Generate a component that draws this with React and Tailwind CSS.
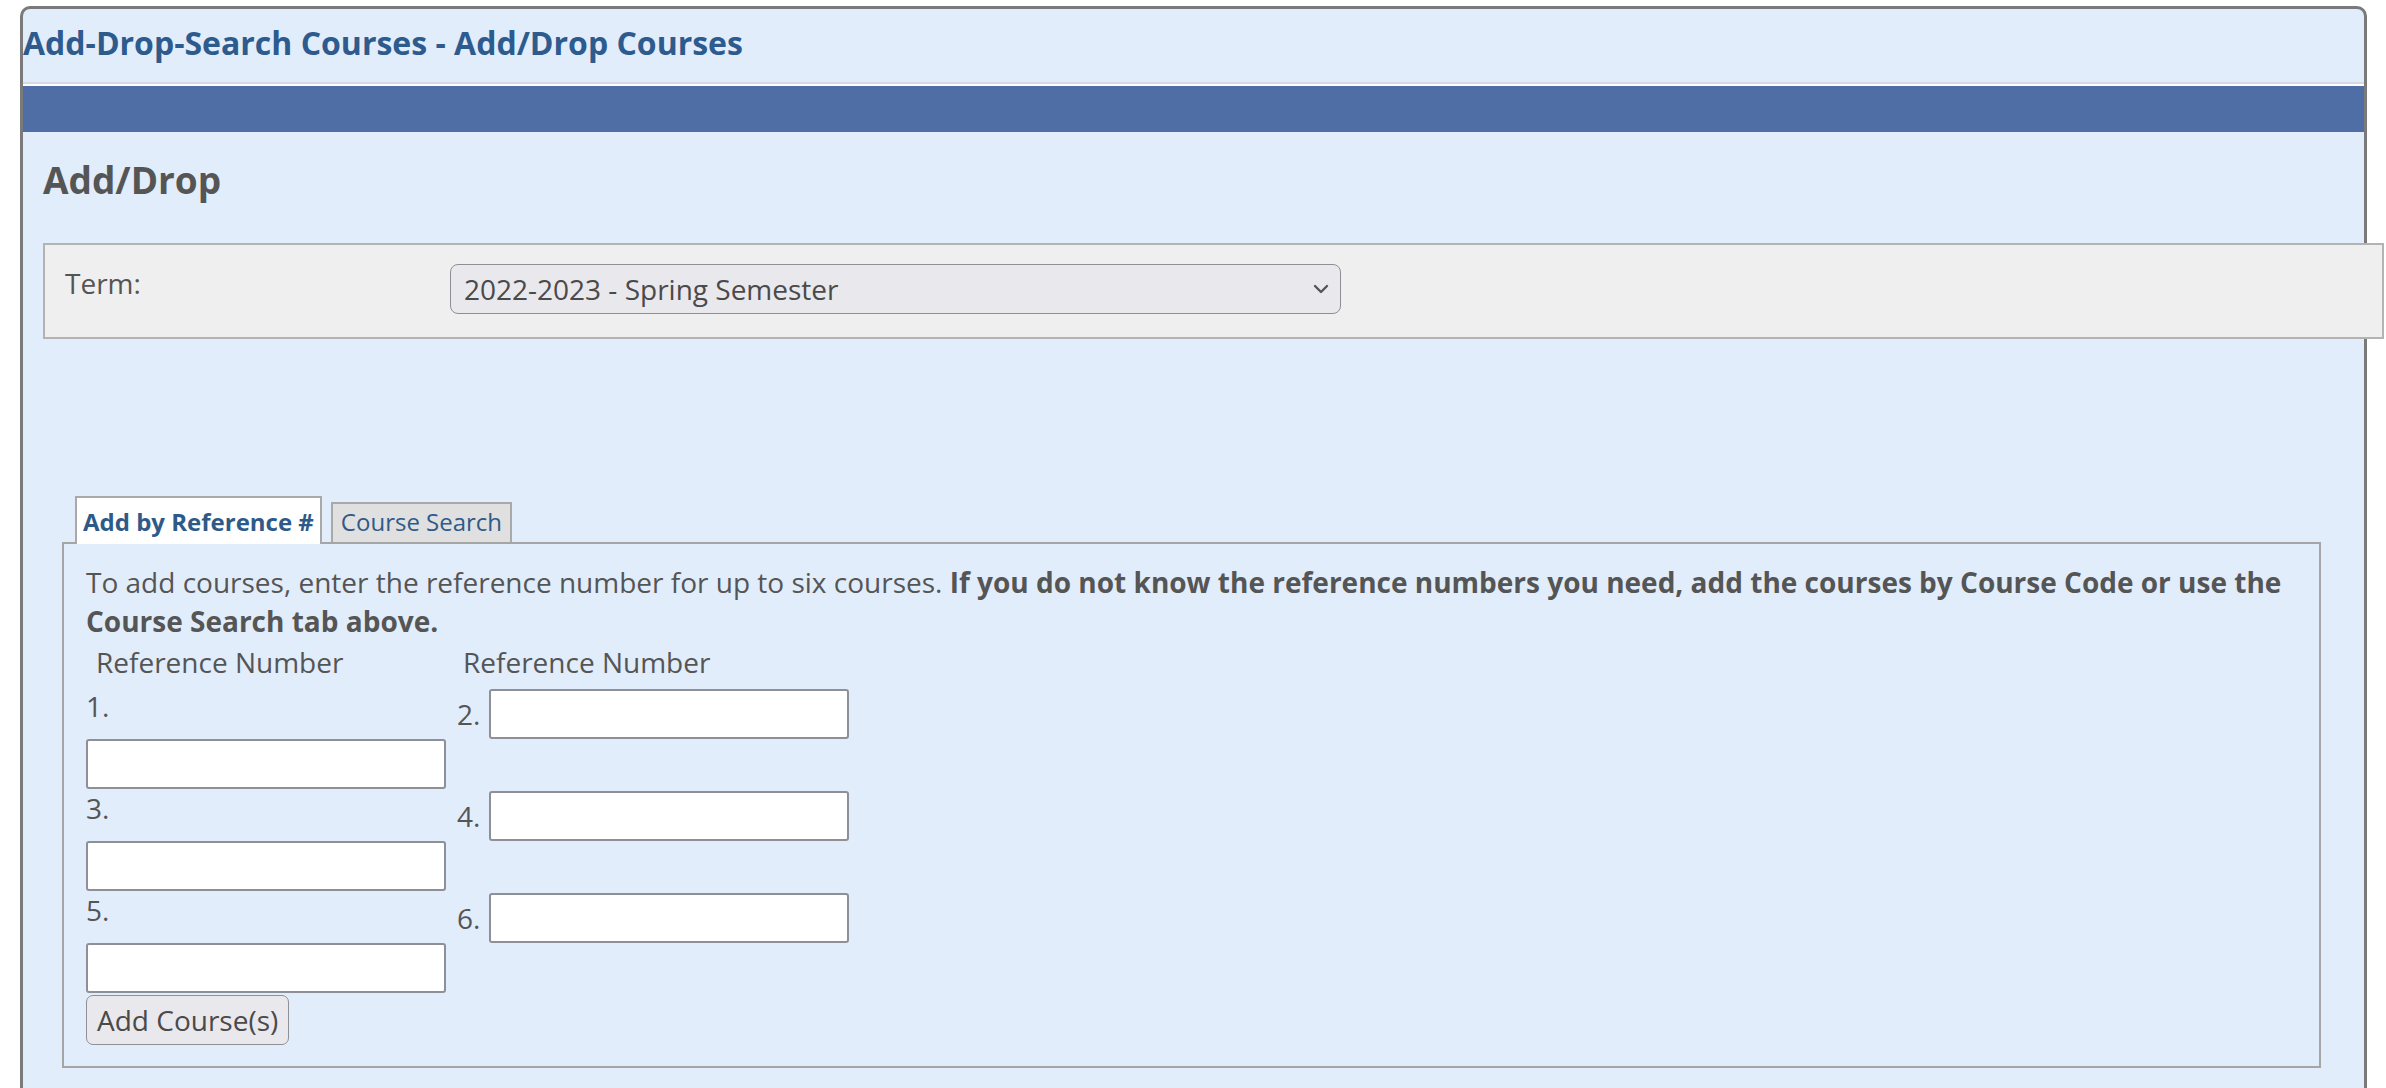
import React from "react";

const rows = [
  ["1.", "2."],
  ["3.", "4."],
  ["5.", "6."],
];

const TextBox = () => (
  <input
    type="text"
    className="block h-[50px] w-[360px] rounded-[3px] border-2 border-[#8f8f97] bg-white outline-none"
  />
);

export default function App() {
  return (
    <div className="min-h-screen overflow-hidden bg-white pl-[20px] pt-[6px] font-['Open_Sans',sans-serif] text-[28px] text-[#555555]">
      <div className="h-[1100px] w-[2347px] rounded-t-[10px] border-[3px] border-b-0 border-[#7a7a7a] bg-[#e1edfb]">
        {/* Page title */}
        <div className="h-[73px] pt-[12px]">
          <h1 className="text-[32px] font-bold leading-[44px] text-[#2e5b8e]">
            Add-Drop-Search Courses - Add/Drop Courses
          </h1>
        </div>
        <div className="h-[2px] bg-[#d5dbe2]" />
        <div className="h-[2px] bg-white" />
        <div className="h-[46px] bg-[#4f6ea5]" />

        <div className="pl-[20px]">
          <h2 className="mt-[23px] text-[37px] font-bold leading-[50px] text-[#555555]">
            Add/Drop
          </h2>

          {/* Term selector */}
          <div className="mt-[38px] flex h-[96px] w-[2341px] items-start border-2 border-[#b3b3b3] bg-[#efefef] pl-[20px] pt-[19px]">
            <span className="w-[385px] leading-[39px]">Term:</span>
            <div className="flex h-[50px] w-[891px] items-center justify-between rounded-[8px] border-[1.5px] border-[#8e8e95] bg-[#e9e8ed] pl-[13px] pr-[11px] text-[#4a4a4a]">
              <span className="leading-[39px]">2022-2023 - Spring Semester</span>
              <svg width="16" height="10" viewBox="0 0 16 10" fill="none">
                <path
                  d="M2 2 L8 8 L14 2"
                  stroke="#555"
                  strokeWidth="2.4"
                  strokeLinecap="round"
                  strokeLinejoin="round"
                />
              </svg>
            </div>
          </div>

          {/* Tabs */}
          <div className="ml-[19px] mt-[157px] w-[2259px]">
            <div className="ml-[13px] flex items-end gap-[9px]">
              <div className="relative z-10 -mb-[2px] h-[48px] border-2 border-b-0 border-[#a9a9a9] bg-white px-[6px] pt-[7px] text-[24px] font-bold leading-[33px] text-[#2e5a8a]">
                Add by Reference #
              </div>
              <div className="h-[40px] border-2 border-b-0 border-[#a9a9a9] bg-[#e0e0e0] px-[8px] pt-[1px] text-[24px] leading-[33px] text-[#2e5a8a]">
                Course Search
              </div>
            </div>

            <div className="border-2 border-[#a5a5a5] pb-[21px] pl-[22px] pr-[20px] pt-[19px]">
              <p className="leading-[38.5px]">
                To add courses, enter the reference number for up to six courses.{" "}
                <b className="font-bold">
                  If you do not know the reference numbers you need, add the
                  courses by Course Code or use the
                  <br />
                  Course Search tab above.
                </b>
              </p>

              <div className="mt-[3px] flex leading-[38.5px]">
                <div className="w-[371px] pl-[10px]">Reference Number</div>
                <div className="pl-[6px]">Reference Number</div>
              </div>

              <div className="mt-[7px] flex flex-col">
                {rows.map(([left, right]) => (
                  <div key={left} className="flex h-[102px] items-start">
                    <div className="w-[371px]">
                      <div className="h-[50px] leading-[34px]">{left}</div>
                      <TextBox />
                    </div>
                    <div className="flex h-[50px] items-center gap-[9px]">
                      <span className="leading-[34px]">{right}</span>
                      <TextBox />
                    </div>
                  </div>
                ))}
              </div>

              <button className="block h-[50px] rounded-[7px] border-[1.5px] border-[#8f8f96] bg-[#e9e8ed] px-[10px] leading-[34px] text-[#4a4a4a]">
                Add Course(s)
              </button>
            </div>
          </div>
        </div>
      </div>
    </div>
  );
}
